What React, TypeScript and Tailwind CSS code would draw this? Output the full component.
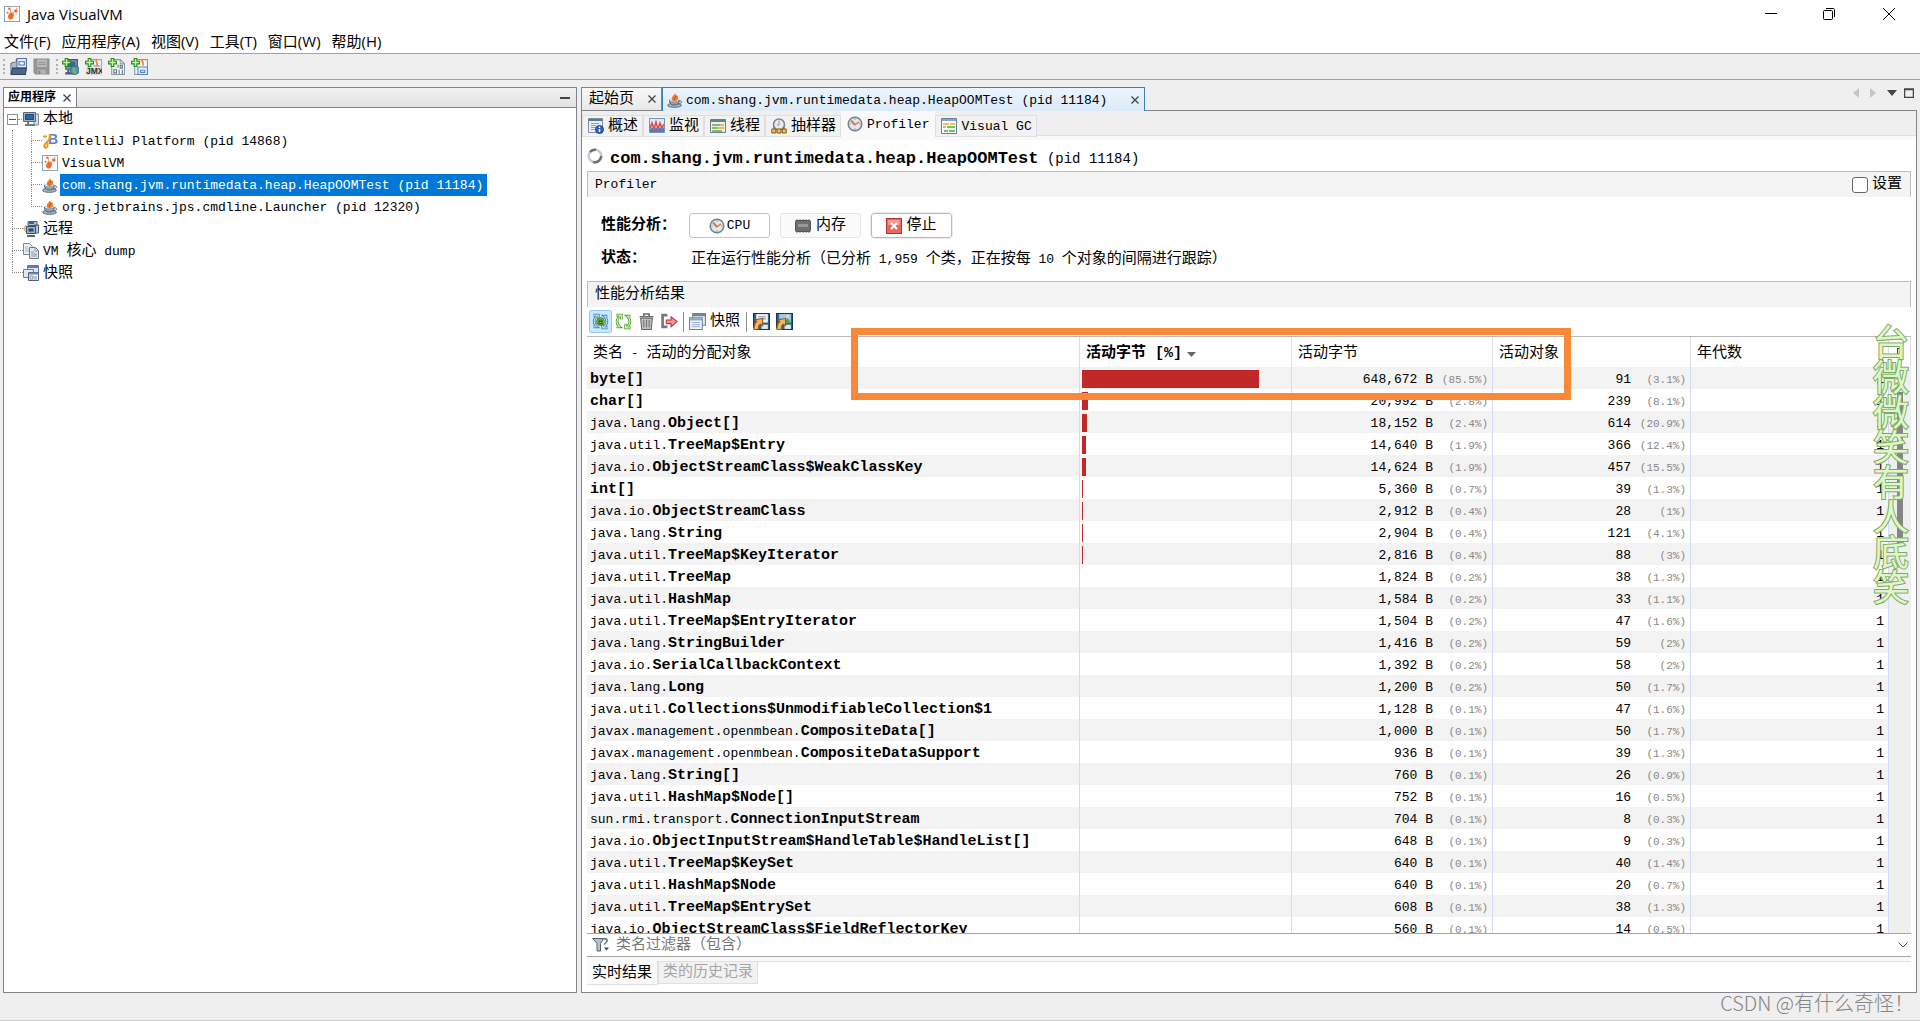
import React, { useState } from "react";

type IconProps = { className?: string };

const MONO = "font-['Liberation_Mono','Noto_Sans_CJK_SC',monospace]";

// Latin runs are set a little smaller than the Chinese characters beside them
const Mixed = ({ text, latin = "text-[13px]" }: { text: string; latin?: string }) => (
  <>
    {text.split(/([\x20-\x7e]+)/).map((part, i) =>
      i % 2 ? (
        <span key={i} className={`whitespace-pre ${latin}`}>
          {part}
        </span>
      ) : (
        part
      )
    )}
  </>
);

const Svg = ({ className = "size-4", children }: IconProps & { children: React.ReactNode }) => (
  <svg viewBox="0 0 16 16" className={`shrink-0 ${className}`} fill="none" aria-hidden="true">
    {children}
  </svg>
);

const VisualVmIcon = ({ className }: IconProps) => (
  <Svg className={className}>
    <rect x=".5" y=".5" width="15" height="15" fill="#fdfdfe" stroke="#8fa6bd" />
    <ellipse cx="7" cy="10" rx="2.7" ry="3.6" fill="#f26a21" transform="rotate(20 7 10)" />
    <circle cx="3.6" cy="6.8" r="1" fill="#f26a21" />
    <circle cx="5.4" cy="2.8" r="1.3" fill="#f26a21" />
    <circle cx="11.8" cy="5" r="1.8" fill="#f26a21" />
    <circle cx="12.8" cy="2.5" r=".8" fill="#f59a68" />
    <path d="M8 8l3-3M6 3l1 4" stroke="#f59a68" />
  </Svg>
);

const OpenIcon = () => (
  <Svg className="size-[17px]">
    <path d="M1 15V5l3-1h2V1" stroke="#3b5878" />
    <path d="M1.500 5.500l3-1.500H7v6H1.500z" fill="#a9bdd2" />
    <path d="M6.500 .5h9v9h-9z" fill="#dfeaf8" stroke="#5075a8" />
    <path d="M8.500 3.500h5v3h-5z" fill="#fff" stroke="#5075a8" />
    <path d="M1 15.500l1.500-6h13l-1 6z" fill="#4a6785" stroke="#2d4560" />
  </Svg>
);

const SaveIcon = () => (
  <Svg className="size-[17px]">
    <path d="M1 1h14v14H2.500L1 13.500z" fill="#959595" stroke="#8b8b8b" />
    <path d="M4 1.500h9v7H4z" fill="#bcbcbc" />
    <path d="M5 4h7M5 6h7" stroke="#959595" />
    <path d="M4 11h8v4H4z" fill="#b2b2b2" />
    <path d="M5 12h2v3H5z" fill="#858585" />
  </Svg>
);

const Plus = () => (
  <path d="M3 .5h2.500v2.500H8v2.500H5.500V8H3V5.500H.5V3H3z" fill="#c9f29a" stroke="#238a1c" />
);

const AddRemoteIcon = () => (
  <Svg className="size-[17px]">
    <path d="M3.500 1.500h11v9h-11z" fill="#7f92a6" stroke="#44586e" />
    <path d="M5.500 3.500h7v5h-7z" fill="#3367a4" />
    <path d="M3 14.500h8M6 11v3" stroke="#44586e" strokeWidth="2" />
    <circle cx="12" cy="11.500" r="4" fill="#4f8fd0" stroke="#43698d" />
    <path d="M10 9l3 1-1 2 2 2-3 1-1-3z" fill="#77bf4c" />
    <Plus />
  </Svg>
);

const AddJmxIcon = () => (
  <Svg className="size-[17px]">
    <path d="M3.500 1.500h12v14h-12z" fill="#eef3f8" stroke="#9cabb9" />
    <path d="M11 1c-2 3 2 3 0 6" stroke="#ee8130" strokeWidth="1.500" />
    <path d="M8 7.500h6" stroke="#7590aa" />
    <path d="M1 9h15v7H1z" fill="#d3d8dd" />
    <text x="1" y="15" fontSize="8" fontWeight="bold" fill="#333" fontFamily="Liberation Sans">
      JMX
    </text>
    <Plus />
  </Svg>
);

const AddDumpIcon = () => (
  <Svg className="size-[17px]">
    <path d="M3.500 1.500h8l4 4v10h-12z" fill="#f3f5f7" stroke="#8797a6" />
    <path d="M11.500 1.500v4h4" stroke="#8797a6" />
    <path d="M9.500 6v3M11.500 7h2v2.500h-2zM5.500 11h2.500v3H5.500zM10.500 11v4M13.500 11v4" stroke="#667788" />
    <Plus />
  </Svg>
);

const AddSnapshotIcon = () => (
  <Svg className="size-[17px]">
    <path d="M3.500 1.500h12v14h-12z" fill="#f3f5f7" stroke="#8797a6" />
    <path d="M11 1c-2 3 2 3 0 6" stroke="#ee8130" strokeWidth="1.500" />
    <path d="M6.500 8.500h9v7h-9z" fill="#e4edf8" stroke="#5d83bd" />
    <path d="M9 11.500h4v2H9z" fill="#fff" stroke="#5d83bd" />
    <Plus />
  </Svg>
);

const HostIcon = () => (
  <Svg>
    <path d="M11 3h4.500v11H11z" fill="#d9dee3" stroke="#7d8b99" />
    <path d="M.5 1.500h12v9H.5z" fill="#a5b2bf" stroke="#55677a" />
    <path d="M2.500 3.500h8v5h-8z" fill="#2a65a6" stroke="#1d4878" />
    <path d="M5 11v2M2 14h10" stroke="#6b7b8b" strokeWidth="2" />
  </Svg>
);

const RemoteIcon = () => (
  <Svg>
    <path d="M5 .5h9v4H5zM11 4h4.500v8H11z" fill="#b7c3cf" stroke="#4c5e70" />
    <path d="M6 2h5" stroke="#2a65a6" strokeWidth="2" />
    <path d="M3.500 5.500h9v7h-9z" fill="#9fb0c0" stroke="#3b4d60" />
    <path d="M5.500 7.500h5v3h-5z" fill="#184a8a" />
    <path d="M4 15h8" stroke="#55677a" strokeWidth="2" />
    <path d="M3 4L1 8l2 3" stroke="#c98a2c" />
    <circle cx="1.500" cy="8" r="1.200" fill="#e8a33a" />
  </Svg>
);

const DumpIcon = () => (
  <Svg>
    <path d="M.5 .5h6l3 3v8h-9z" fill="#eceff2" stroke="#7c8b9a" />
    <path d="M2 4h3M2 6h4M2 8h4" stroke="#a9b5c0" />
    <path d="M6.500 4.500h6l3 3v8h-9z" fill="#e4e9ee" stroke="#66788a" />
    <path d="M12 5v3h3M8 9h3M8 11h6M8 13h6" stroke="#8494a4" />
  </Svg>
);

const SnapshotsIcon = () => (
  <Svg>
    <path d="M4.500 .5h11v9h-11z" fill="#dfe9f6" stroke="#5d7db0" />
    <path d="M4.500 2h11" stroke="#5d7db0" strokeWidth="2" />
    <path d="M.5 4.500h10v8H.5z" fill="#dfe9f6" stroke="#5d7db0" />
    <path d="M5.500 7.500h10v8h-10z" fill="#f4f7fb" stroke="#4c5f78" />
    <path d="M5.500 8.500h10" stroke="#7088a8" strokeWidth="2" />
    <path d="M7 11h3v3H7zM11 12h3M11 14h3" stroke="#7d8da0" />
  </Svg>
);

const IdeaIcon = () => (
  <Svg>
    <text x="6" y="11" fontSize="14" fontWeight="bold" fill="#5b83d0" fontFamily="Liberation Sans">
      B
    </text>
    <path d="M1 3.500h4M8 1c0 5-1 6-3 8s-3.500 3-2.500 5 4 0 3-4" stroke="#f39a1d" strokeWidth="2" />
  </Svg>
);

const JavaIcon = ({ className }: IconProps) => (
  <Svg className={className}>
    <ellipse cx="7.500" cy="13.300" rx="7" ry="2" fill="#a9b6c0" stroke="#5b6b78" />
    <path d="M2.500 8h9.500c.5 4-2 5-4.700 5s-5-1-4.800-5z" fill="#8fa1af" stroke="#4c5d6b" />
    <path d="M12 9c4-1 3 3-1 3" stroke="#5b6b78" />
    <ellipse cx="7.200" cy="8" rx="4.700" ry="1.200" fill="#dfe6ea" />
    <path d="M8.500 0c1 2-5 4-3.500 8 1 1.500 5 1.500 6-1 .6-2-.5-3-1-4-.5 1-2 0-1.500-3z" fill="#ef7d2e" />
    <path d="M7.500 8c-1-2 1-2 1.500-4" stroke="#c54b16" />
  </Svg>
);

const OverviewIcon = () => (
  <Svg>
    <path d="M.5 .5h14v14H.5z" fill="#e9eff5" stroke="#7e90a2" />
    <path d="M.5 2h14" stroke="#5d7894" strokeWidth="2" />
    <path d="M3 5.500h8M3 7.500h5M3 9.500h5M3 11.500h4" stroke="#90a2b4" />
    <circle cx="11.500" cy="11.500" r="4" fill="#3462b4" stroke="#21458a" />
    <path d="M11.500 8.500v1.500M11.500 11v3" stroke="#fff" strokeWidth="1.500" />
  </Svg>
);

const MonitorIcon = () => (
  <Svg>
    <path d="M.5 .5h15v14H.5z" fill="#dce8f3" stroke="#7394b5" />
    <path d="M1 14v-3l2-2 2 3 2-3 2 3 2-3 2 2 2-2v5z" fill="#4481c4" />
    <path d="M1 10l2-5 2 6 2-7 2 7 2-6 2 5 2-4" stroke="#dd4a4a" strokeWidth="1.500" />
  </Svg>
);

const ThreadsIcon = () => (
  <Svg>
    <path d="M.5 1.500h15v13H.5z" fill="#eef1e6" stroke="#6b7d8e" />
    <path d="M.5 3h15" stroke="#65809a" strokeWidth="2" />
    <path d="M2 7h8M2 10h5M2 13h10" stroke="#6ba63c" strokeWidth="1.500" />
    <path d="M10 7h4M7 10h7" stroke="#e8a336" strokeWidth="1.500" />
  </Svg>
);

const SamplerIcon = () => (
  <Svg>
    <circle cx="8" cy="6.500" r="5.500" fill="#e3edf6" stroke="#75899c" strokeWidth="1.500" />
    <path d="M8 2.500v4.500h-2" stroke="#e57e31" />
    <path d="M.8 11h4v4h-4zM6 11h4v4H6zM11.200 11h4v4h-4z" fill="#f2c158" stroke="#8a5a10" />
    <path d="M3 11V8.500M13 11V8.500" stroke="#8a5a10" />
  </Svg>
);

const ClockIcon = () => (
  <Svg>
    <circle cx="8" cy="8" r="6.800" fill="#dbe9f6" stroke="#78828b" strokeWidth="1.500" />
    <path d="M8 2.500v1M8 12.500v1M2.500 8h1M12.500 8h1" stroke="#5e6b77" />
    <path d="M4 4.500L8 9" stroke="#e8742a" strokeWidth="2" />
    <path d="M7.500 9L12 6" stroke="#e8742a" strokeWidth="1.500" />
  </Svg>
);

const VisualGcIcon = () => (
  <Svg>
    <path d="M.5 .5h15v15H.5z" fill="#fcfdf8" stroke="#6b7d9a" />
    <path d="M1 2h14" stroke="#8da5c4" strokeWidth="2" />
    <path d="M2 6h6M9 6h5" stroke="#e3b32d" strokeWidth="1.500" />
    <path d="M6 9h8M3 13h4M8 13h6" stroke="#37b537" strokeWidth="1.500" />
    <path d="M2 9h3" stroke="#dd5050" />
  </Svg>
);

const SpinnerIcon = () => (
  <Svg>
    <circle cx="8" cy="8" r="6.300" stroke="#c9c9ce" strokeWidth="2.500" />
    <path d="M3 4a6.300 6.300 0 0 1 6-2.200M14.200 8a6.300 6.300 0 0 1-8 6" stroke="#6f6f78" strokeWidth="2.500" />
  </Svg>
);

const MemoryIcon = () => (
  <Svg>
    <path d="M2 1v14M5 1v14M8 1v14M11 1v14M14 1v14" stroke="#777" />
    <rect x=".5" y="2.500" width="15" height="11" rx="1" fill="#6e6e6e" stroke="#555" />
    <path d="M3 6h10v3H3z" fill="#999" />
  </Svg>
);

const StopIcon = () => (
  <Svg>
    <rect x=".5" y=".5" width="15" height="15" fill="#e8685f" stroke="#ad3732" />
    <path d="M2 2h12v5H2z" fill="#f09a93" />
    <path d="M5 5l6 6M11 5l-6 6" stroke="#fff" strokeWidth="2" />
  </Svg>
);

// two arrows chasing each other; drawn once as an edge and once as a lighter core
const Arrows = ({ color, edge }: { color: string; edge: string }) => (
  <>
    <path d="M1 2h5v4M5.500 2.500C1 5 1 10 4.500 13H1.500M15 14h-5v-4M10.500 13.500C15 11 15 6 11.500 3h3" stroke={edge} strokeWidth="2.500" />
    <path d="M1 2h5v4M5.500 2.500C1 5 1 10 4.500 13H1.500M15 14h-5v-4M10.500 13.500C15 11 15 6 11.500 3h3" stroke={color} />
  </>
);

const AutoRefreshIcon = () => (
  <Svg className="size-[17px]">
    <Arrows color="#b5d8f0" edge="#4684b4" />
    <circle cx="8" cy="8" r="3.500" fill="#8fce5c" stroke="#3a7d22" />
    <path d="M6.500 6.500h3v3.500h-3zM6.500 8h3" stroke="#2c5d1b" />
  </Svg>
);

const RefreshIcon = () => (
  <Svg className="size-[17px]">
    <Arrows color="#d2f0ae" edge="#559f37" />
  </Svg>
);

const TrashIcon = () => (
  <Svg className="size-[17px]">
    <path d="M2.500 5h11l-1 10.500h-9z" fill="#bdbdbd" stroke="#6a6a6a" />
    <path d="M5.500 6.500v7M8 6.500v7M10.500 6.500v7" stroke="#777" />
    <path d="M1.500 3.500h13M5.500 3V1h5v2" stroke="#6a6a6a" strokeWidth="1.500" />
  </Svg>
);

const ExportIcon = () => (
  <Svg className="size-[17px]">
    <path d="M6 2H1.500v11H6" stroke="#777" strokeWidth="2.500" />
    <path d="M5 6.500h4.500v-3L15.300 8l-5.800 5v-3H5z" fill="#f19a9a" stroke="#c22e35" />
  </Svg>
);

const SnapshotIcon = () => (
  <Svg className="size-[17px]">
    <path d="M3.500 .5h12v11h-12z" fill="#e3eaf1" stroke="#6e8294" />
    <path d="M3.500 2h12" stroke="#6e8294" strokeWidth="2" />
    <path d="M.5 4.500h12v11H.5z" fill="#f4f7fa" stroke="#6e8294" />
    <path d="M.5 6h12" stroke="#8da3b8" strokeWidth="2" />
    <path d="M2.500 9h8M2.500 11h8M2.500 13h8" stroke="#8fb1d2" />
  </Svg>
);

const SaveViewIcon = ({ picture = false }: { picture?: boolean }) => (
  <Svg className="size-[17px]">
    <path d="M.5 .5h15v15H2L.5 14z" fill="#35618a" stroke="#183650" />
    <path d="M3 1h11v8H3z" fill={picture ? "#9fcdf0" : "#eef2f5"} />
    {picture ? (
      <>
        <path d="M7 9l4-4 3 4z" fill="#4fa53b" />
        <circle cx="11" cy="3" r="1" fill="#fff3a0" />
      </>
    ) : (
      <path d="M5 3.500h7M7 5.500h5" stroke="#8194a6" />
    )}
    <path d="M8 11h6v4H8z" fill="#e3e8ec" />
    <path d="M1 15.500c-.5-4 .5-6 2.500-7.500L2 6.500 9 5v7L7 10.500c-2 1-2 3-2 5z" fill="#f4b55c" stroke="#96551b" />
  </Svg>
);

const FunnelIcon = () => (
  <svg viewBox="0 0 18 16" className="h-4 w-[18px] shrink-0" fill="none" aria-hidden="true">
    <path d="M.7 1.500h11L8.500 6.500V14H5V6.500z" fill="#b9c0c6" stroke="#56636e" />
    <path d="M11 2.500c2-2 5 0 4 2l-3 3" stroke="#6e7b87" strokeWidth="1.500" />
    <path d="M12 10.500h5l-2.500 3z" fill="#3e4b57" />
  </svg>
);

const menus = ["文件(F)", "应用程序(A)", "视图(V)", "工具(T)", "窗口(W)", "帮助(H)"];

const localApps = [
  { name: "IntelliJ Platform (pid 14868)", icon: <IdeaIcon /> },
  { name: "VisualVM", icon: <VisualVmIcon /> },
  { name: "com.shang.jvm.runtimedata.heap.HeapOOMTest (pid 11184)", icon: <JavaIcon /> },
  { name: "org.jetbrains.jps.cmdline.Launcher (pid 12320)", icon: <JavaIcon /> },
];

const rootNodes = [
  { name: "远程", icon: <RemoteIcon /> },
  { name: "VM 核心 dump", icon: <DumpIcon /> },
  { name: "快照", icon: <SnapshotsIcon /> },
];

const views = [
  { name: "概述", icon: <OverviewIcon /> },
  { name: "监视", icon: <MonitorIcon /> },
  { name: "线程", icon: <ThreadsIcon /> },
  { name: "抽样器", icon: <SamplerIcon /> },
  { name: "Profiler", icon: <ClockIcon /> },
  { name: "Visual GC", icon: <VisualGcIcon /> },
];

// package, class, live bytes, bytes %, live objects, objects %
type Row = [string, string, string, number, number, number];

const rows: Row[] = [
  ["", "byte[]", "648,672", 85.5, 91, 3.1],
  ["", "char[]", "20,992", 2.8, 239, 8.1],
  ["java.lang.", "Object[]", "18,152", 2.4, 614, 20.9],
  ["java.util.", "TreeMap$Entry", "14,640", 1.9, 366, 12.4],
  ["java.io.", "ObjectStreamClass$WeakClassKey", "14,624", 1.9, 457, 15.5],
  ["", "int[]", "5,360", 0.7, 39, 1.3],
  ["java.io.", "ObjectStreamClass", "2,912", 0.4, 28, 1],
  ["java.lang.", "String", "2,904", 0.4, 121, 4.1],
  ["java.util.", "TreeMap$KeyIterator", "2,816", 0.4, 88, 3],
  ["java.util.", "TreeMap", "1,824", 0.2, 38, 1.3],
  ["java.util.", "HashMap", "1,584", 0.2, 33, 1.1],
  ["java.util.", "TreeMap$EntryIterator", "1,504", 0.2, 47, 1.6],
  ["java.lang.", "StringBuilder", "1,416", 0.2, 59, 2],
  ["java.io.", "SerialCallbackContext", "1,392", 0.2, 58, 2],
  ["java.lang.", "Long", "1,200", 0.2, 50, 1.7],
  ["java.util.", "Collections$UnmodifiableCollection$1", "1,128", 0.1, 47, 1.6],
  ["javax.management.openmbean.", "CompositeData[]", "1,000", 0.1, 50, 1.7],
  ["javax.management.openmbean.", "CompositeDataSupport", "936", 0.1, 39, 1.3],
  ["java.lang.", "String[]", "760", 0.1, 26, 0.9],
  ["java.util.", "HashMap$Node[]", "752", 0.1, 16, 0.5],
  ["sun.rmi.transport.", "ConnectionInputStream", "704", 0.1, 8, 0.3],
  ["java.io.", "ObjectInputStream$HandleTable$HandleList[]", "648", 0.1, 9, 0.3],
  ["java.util.", "TreeMap$KeySet", "640", 0.1, 40, 1.4],
  ["java.util.", "HashMap$Node", "640", 0.1, 20, 0.7],
  ["java.util.", "TreeMap$EntrySet", "608", 0.1, 38, 1.3],
  ["java.io.", "ObjectStreamClass$FieldReflectorKey", "560", 0.1, 14, 0.5],
];

const TitleBar = () => (
  <header className="flex h-7 shrink-0 items-center pl-1 text-[15px]">
    <VisualVmIcon />
    <h1 className="ml-[7px] font-['Open_Sans',sans-serif] text-[15px]">Java VisualVM</h1>
    <div className="ml-auto flex">
      <button aria-label="最小化" className="flex w-[58px] justify-center">
        <Svg>
          <path d="M2 7.500h12" stroke="#000" />
        </Svg>
      </button>
      <button aria-label="还原" className="flex w-[58px] justify-center">
        <Svg>
          <rect x="2.500" y="4.500" width="9" height="9" rx="1" stroke="#000" />
          <path d="M5 2.500h7c1 0 1.500.5 1.500 1.500v7" stroke="#000" />
        </Svg>
      </button>
      <button aria-label="关闭" className="flex w-[62px] justify-center">
        <Svg>
          <path d="M2 2l12 12M14 2L2 14" stroke="#000" />
        </Svg>
      </button>
    </div>
  </header>
);

const Grip = () => <span className="h-[15px] border-l-2 border-dotted border-[#b0b0b0]" />;

const Toolbar = () => (
  <div className="flex h-[27px] shrink-0 items-center border-y border-[#a0a0a0] bg-[#efefef] pl-[3px]">
    <Grip />
    <div className="ml-[5px] mr-[6px] flex gap-[6px]">
      <button aria-label="装入">
        <OpenIcon />
      </button>
      <button aria-label="另存为" disabled>
        <SaveIcon />
      </button>
    </div>
    <Grip />
    <div className="ml-1 flex gap-[6px]">
      <button aria-label="添加远程主机">
        <AddRemoteIcon />
      </button>
      <button aria-label="添加 JMX 连接">
        <AddJmxIcon />
      </button>
      <button aria-label="添加 VM 核心 dump">
        <AddDumpIcon />
      </button>
      <button aria-label="添加快照">
        <AddSnapshotIcon />
      </button>
    </div>
  </div>
);

const CloseMark = () => (
  <svg viewBox="0 0 8 8" className="size-2" aria-hidden="true">
    <path d="M.5 .5l7 7M7.500 .5l-7 7" stroke="#444" strokeWidth="1.300" />
  </svg>
);

const ApplicationsPanel = () => {
  const [selected, setSelected] = useState(localApps[2].name);

  return (
    <aside className="flex w-[574px] shrink-0 flex-col border border-[#83838c] bg-white">
      <div className="flex h-5 shrink-0 items-center border-b border-[#83838c] bg-linear-to-b from-[#f2f2f2] to-[#e2e2e2]">
        <div className="flex h-full items-center gap-[7px] border-r border-[#83838c] bg-white pl-1 pr-[5px]">
          <span className="text-[12px] font-bold">应用程序</span>
          <button aria-label="关闭应用程序">
            <CloseMark />
          </button>
        </div>
        <button aria-label="最小化窗口组" className="ml-auto mr-[6px] h-[2px] w-[10px] bg-[#444]" />
      </div>
      <ul className="leading-5">
        <li>
          <div className="flex h-[22px] items-center pl-[3px]">
            <button
              aria-label="折叠"
              className="flex size-[11px] items-center justify-center border border-[#919191] bg-white"
            >
              <span className="h-px w-[7px] bg-[#3c5a91]" />
            </button>
            <span className="mr-px w-[4px] border-t border-dotted border-[#888]" />
            <HostIcon />
            <span className="pl-1 pt-[2px]">本地</span>
          </div>
          <ul className="ml-2 border-l border-dotted border-[#888]">
            {localApps.map(({ name, icon }, i) => (
              <li key={name} className="flex h-[22px] items-center pl-[18px]">
                <span className="flex h-full w-[11px] flex-col">
                  <span className="h-[11px] border-b border-l border-dotted border-[#888]" />
                  {i < localApps.length - 1 && (
                    <span className="h-[11px] border-l border-dotted border-[#888]" />
                  )}
                </span>
                {icon}
                <button
                  onClick={() => setSelected(name)}
                  className={`ml-[2px] h-[22px] px-[2px] pt-[2px] ${
                    selected === name ? "bg-[#0078d7] pr-1 text-white" : ""
                  }`}
                >
                  <Mixed text={name} />
                </button>
              </li>
            ))}
          </ul>
        </li>
        {rootNodes.map(({ name, icon }, i) => (
          <li key={name} className="flex h-[22px] items-center pl-2">
            <span className="flex h-full w-[11px] flex-col">
              <span className="h-[11px] border-b border-l border-dotted border-[#888]" />
              {i < rootNodes.length - 1 && (
                <span className="h-[11px] border-l border-dotted border-[#888]" />
              )}
            </span>
            {icon}
            <span className="pl-1 pt-[2px]">
              <Mixed text={name} />
            </span>
          </li>
        ))}
      </ul>
    </aside>
  );
};

const DocumentTabs = () => (
  <div className="flex h-6 shrink-0 items-end">
    <div className="flex h-full items-center gap-[14px] border border-[#83838c] bg-linear-to-b from-[#f8f8f8] to-[#e8e8e8] pl-[7px] pr-[5px]">
      <button className="pt-[2px]">起始页</button>
      <button aria-label="关闭起始页">
        <CloseMark />
      </button>
    </div>
    <div className="flex h-full items-center border-x border-t border-[#3c7fb1] bg-linear-to-b from-[#eaf4fd] to-[#dcebf9] pl-1 pr-[5px]">
      <JavaIcon />
      <button className="ml-[3px] pt-[2px]">
        <Mixed text="com.shang.jvm.runtimedata.heap.HeapOOMTest (pid 11184)" />
      </button>
      <button aria-label="关闭选项卡" className="ml-6">
        <CloseMark />
      </button>
    </div>
    <div className="flex h-full flex-1 items-start justify-end gap-[7px] border-b border-[#83838c] pr-[3px] pt-px">
      <button aria-label="向左滚动">
        <svg viewBox="0 0 6 10" className="h-[10px] w-[6px]">
          <path d="M6 0v10L0 5z" fill="#c5c5c5" />
        </svg>
      </button>
      <button aria-label="向右滚动" className="ml-1">
        <svg viewBox="0 0 6 10" className="h-[10px] w-[6px]">
          <path d="M0 0v10l6-5z" fill="#c5c5c5" />
        </svg>
      </button>
      <button aria-label="显示文档列表" className="ml-1">
        <svg viewBox="0 0 10 10" className="size-[10px]">
          <path d="M0 2h10L5 8z" fill="#444" />
        </svg>
      </button>
      <button aria-label="最大化窗口">
        <svg viewBox="0 0 10 10" className="size-[10px]">
          <path d="M.5 1v8.500h9V1zM0 1.500h10" fill="none" stroke="#444" strokeWidth="1.500" />
        </svg>
      </button>
    </div>
  </div>
);

const ViewTabs = () => {
  const [active, setActive] = useState("Profiler");

  return (
    <nav className="flex h-[29px] shrink-0 items-start border-b-4 border-[#f9f9f9] bg-[#efefef]">
      {views.map(({ name, icon }) => (
        <button
          key={name}
          onClick={() => setActive(name)}
          className={`flex items-center gap-1 ${
            active === name
              ? "h-[29px] bg-[#f9f9f9] pb-1 pl-[6px] pr-[6px]"
              : "mt-1 h-[22px] border border-[#dfdfdf] bg-[#f2f2f2] pl-[5px] pr-1"
          }`}
        >
          {icon}
          <span className="pt-[2px]">
            <Mixed text={name} />
          </span>
        </button>
      ))}
      <div className="h-[25px] flex-1 border-b border-[#dfdfdf]" />
    </nav>
  );
};

const SectionBar = ({ title, children }: { title: string; children?: React.ReactNode }) => (
  <div className="mr-[5px] flex h-[26px] shrink-0 items-center border-l border-r border-t border-[#bcbcbc] bg-[#f4f4f4] pl-[7px] pr-2">
    <h2>
      <Mixed text={title} />
    </h2>
    {children}
  </div>
);

const ProfilerControls = () => (
  <div className="h-[84px] shrink-0 pl-[14px] pt-4">
    <div className="flex h-[25px] items-center">
      <span className="w-[88px] font-bold">性能分析：</span>
      <div className="flex gap-[10px]">
        <button className="flex h-[25px] w-[81px] items-center justify-center gap-[2px] rounded-[3px] border border-[#c3c3c3] bg-white">
          <ClockIcon />
          <Mixed text="CPU" />
        </button>
        <button
          disabled
          className="flex h-[25px] w-[81px] items-center justify-center gap-[5px] rounded-[3px] border border-[#e6e6e6] bg-[#fafafa]"
        >
          <MemoryIcon />
          内存
        </button>
        <button className="flex h-[25px] w-[81px] items-center justify-center gap-1 rounded-[3px] border border-[#b9b9b9] bg-white outline-1 outline-[#ececec]">
          <StopIcon />
          停止
        </button>
      </div>
    </div>
    <div className="mt-[10px] flex h-[22px] items-center">
      <span className="w-[90px] font-bold">状态：</span>
      <span className="pt-[2px]">
        <Mixed text="正在运行性能分析（已分析 1,959 个类，正在按每 10 个对象的间隔进行跟踪）" />
      </span>
    </div>
  </div>
);

const ResultsToolbar = () => (
  <div className="mr-[5px] flex h-[30px] shrink-0 items-center border-b border-[#b8b8b8] pl-[2px]">
    <button
      aria-label="自动刷新"
      className="flex size-[23px] items-center justify-center rounded-[2px] border border-[#90c8f6] bg-[#cce8ff]"
    >
      <AutoRefreshIcon />
    </button>
    <button aria-label="刷新" className="ml-[3px]">
      <RefreshIcon />
    </button>
    <button aria-label="运行 GC" className="ml-[6px]">
      <TrashIcon />
    </button>
    <button aria-label="导出" className="ml-[6px]">
      <ExportIcon />
    </button>
    <span className="mx-[5px] h-5 w-px bg-[#8f8f8f]" />
    <button className="flex items-center gap-1">
      <SnapshotIcon />
      快照
    </button>
    <span className="mx-[6px] h-5 w-px bg-[#8f8f8f]" />
    <button aria-label="将当前视图另存为数据">
      <SaveViewIcon />
    </button>
    <button aria-label="将当前视图另存为图像" className="ml-[6px]">
      <SaveViewIcon picture />
    </button>
  </div>
);

const ResultsTable = () => (
  <div className="relative mr-[5px] flex min-h-0 flex-1 border-b border-[#a5a5a5]">
    <div className="min-w-0 flex-1 overflow-hidden">
      <table className="w-full table-fixed border-collapse">
        <colgroup>
          <col />
          <col className="w-[212px]" />
          <col className="w-[201px]" />
          <col className="w-[198px]" />
          <col className="w-[198px]" />
        </colgroup>
        <thead>
          <tr className="h-[30px] text-left [&>th]:border-r [&>th]:border-[#dedede] [&>th]:pl-[6px] [&>th]:pt-1 [&>th]:font-normal">
            <th scope="col">
              <Mixed text="类名 - 活动的分配对象" />
            </th>
            <th scope="col">
              <button className="flex items-center gap-[5px] font-bold">
                <span>
                  <Mixed text="活动字节 [%]" latin="text-[15px]" />
                </span>
                <svg viewBox="0 0 9 5" className="h-[5px] w-[9px]" aria-hidden="true">
                  <path d="M0 0h9L4.500 5z" fill="#666" />
                </svg>
              </button>
            </th>
            <th scope="col">活动字节</th>
            <th scope="col">活动对象</th>
            <th scope="col">年代数</th>
          </tr>
        </thead>
        <tbody>
          {rows.map(([pkg, cls, bytes, bytesPct, objects, objectsPct]) => (
            <tr
              key={pkg + cls}
              className="h-[22px] whitespace-nowrap text-[13px] leading-[18px] odd:bg-[#f3f3f3] [&>td]:border-r [&>td]:border-[#d3dcf4] [&>td]:p-0"
            >
              <td>
                <div className="pl-[3px] pt-1">
                  {pkg}
                  <span className="text-[15px] font-bold">{cls}</span>
                </div>
              </td>
              <td>
                {bytesPct >= 0.4 && (
                  <div className="mx-[2px] pt-px">
                    <div className="h-[18px] bg-[#c22828]" style={{ width: `${bytesPct}%` }} />
                  </div>
                )}
              </td>
              <td>
                <div className="flex items-baseline justify-end pr-1 pt-1">
                  <span>{bytes} B</span>
                  <span className="w-[55px] text-right text-[11px] text-[#888]">({bytesPct}%)</span>
                </div>
              </td>
              <td>
                <div className="flex items-baseline justify-end pr-1 pt-1">
                  <span>{objects}</span>
                  <span className="w-[55px] text-right text-[11px] text-[#888]">({objectsPct}%)</span>
                </div>
              </td>
              <td>
                <div className="pr-1 pt-1 text-right">1</div>
              </td>
            </tr>
          ))}
        </tbody>
      </table>
    </div>
    <div className="flex w-[22px] shrink-0 flex-col items-center bg-[#efefef]">
      <button
        aria-label="列选择"
        className="flex h-[30px] w-full items-center justify-center border-r border-[#dedede] bg-white"
      >
        <span className="h-2 w-[5px] border border-[#444]" />
      </button>
      <span className="mt-[25px] h-[151px] w-[6px] bg-[#858585]" />
    </div>
    <div className="pointer-events-none absolute -top-[9px] left-[264px] right-[340px] h-[72px] border-[7px] border-[#f98938]" />
    <div className="pointer-events-none absolute -top-[14px] right-[2px] w-9 text-center font-['Noto_Sans_CJK_SC',sans-serif] text-[36px] leading-[35px] text-[#ddf8c4] [-webkit-text-stroke:2px_#7fa86b] [paint-order:stroke]">
      台微微笑有人底笑
    </div>
  </div>
);

const FilterBar = () => (
  <div className="mr-[5px] flex h-[23px] shrink-0 items-center border-b border-[#a5a5a5] pl-[5px] pr-[3px]">
    <FunnelIcon />
    <input
      type="text"
      aria-label="类名过滤器"
      placeholder="类名过滤器（包含）"
      className="ml-[6px] h-[22px] flex-1 outline-none placeholder:text-[#777]"
    />
    <button aria-label="显示过滤器列表">
      <svg viewBox="0 0 10 6" className="h-[6px] w-[10px]" fill="none">
        <path d="M.5 .5L5 5 9.500 .5" stroke="#555" />
      </svg>
    </button>
  </div>
);

const ResultTabs = () => (
  <div className="mr-[5px] flex h-[35px] shrink-0 items-start border-t-4 border-[#f9f9f9]">
    <button className="h-6 border-b border-r border-[#e0e0e0] bg-[#f9f9f9] px-[5px] pt-[3px]">实时结果</button>
    <button
      disabled
      className="h-[23px] border border-[#e0e0e0] bg-[#f2f2f2] px-1 leading-[18px] text-[#a5a5a5]"
    >
      类的历史记录
    </button>
    <div className="flex-1 border-t border-[#e0e0e0]" />
  </div>
);

const ProfilerDocument = () => (
  <section className="flex min-w-0 flex-1 flex-col">
    <DocumentTabs />
    <div className="flex min-h-0 flex-1 flex-col border-x border-b border-[#83838c] bg-white">
      <ViewTabs />
      <div className="flex h-[31px] shrink-0 items-center pl-[5px]">
        <SpinnerIcon />
        <h2 className="pl-[7px] pt-[6px] text-[17px] font-bold">
          com.shang.jvm.runtimedata.heap.HeapOOMTest
          <span className="whitespace-pre text-[14px] font-normal"> (pid 11184)</span>
        </h2>
      </div>
      <div className="flex min-h-0 flex-1 flex-col pl-[5px]">
        <SectionBar title="Profiler">
          <label className="ml-auto flex items-center gap-1">
            <input
              type="checkbox"
              className="size-4 appearance-none rounded-[3px] border border-[#666] bg-white checked:bg-[#0078d7]"
            />
            设置
          </label>
        </SectionBar>
        <ProfilerControls />
        <SectionBar title="性能分析结果" />
        <ResultsToolbar />
        <ResultsTable />
        <FilterBar />
        <ResultTabs />
      </div>
    </div>
  </section>
);

const App = () => (
  <div className="flex h-screen flex-col overflow-hidden bg-white text-black">
    <TitleBar />
    <nav className="flex h-[25px] shrink-0 items-center gap-[11px] pl-1 pt-px font-['Open_Sans','Noto_Sans_CJK_SC',sans-serif] text-[15px]">
      {menus.map((menu) => (
        <button key={menu}>{menu}</button>
      ))}
    </nav>
    <Toolbar />
    <main
      className={`flex min-h-0 flex-1 gap-1 bg-[#efefef] px-[3px] pt-[7px] text-[15px] leading-5 ${MONO}`}
    >
      <ApplicationsPanel />
      <ProfilerDocument />
    </main>
    <footer className="flex h-7 shrink-0 items-center justify-end border-b border-[#d0d0d0] bg-[#efefef] pb-2 pr-[6px] font-['Noto_Sans_CJK_SC',sans-serif] text-[20px] font-light leading-5 text-[#858585]">
      CSDN @有什么奇怪！
    </footer>
  </div>
);

export default App;
